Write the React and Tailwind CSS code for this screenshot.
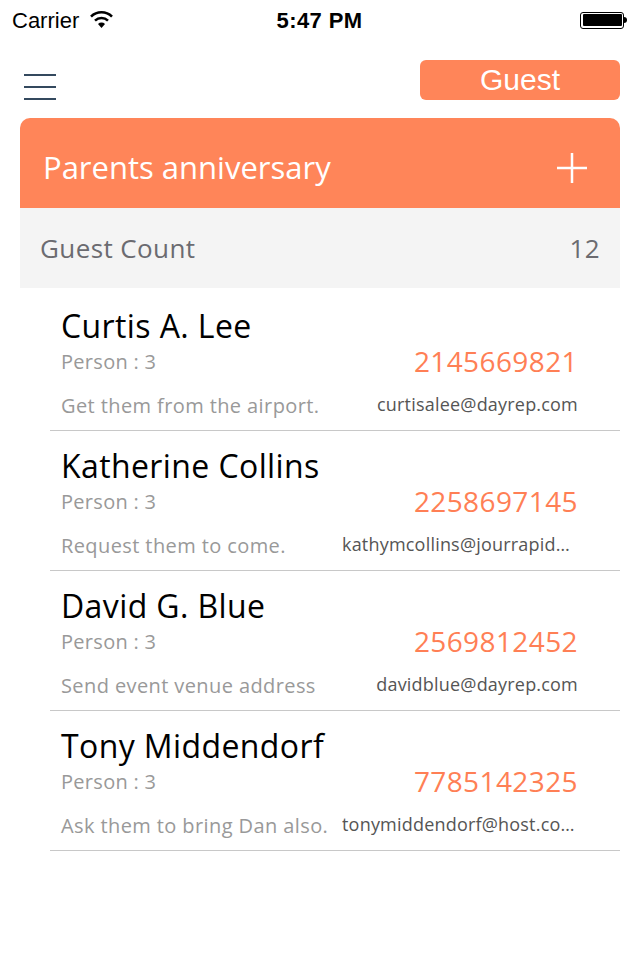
const guests = [
  {
    name: "Curtis A. Lee",
    persons: 3,
    phone: "2145669821",
    note: "Get them from the airport.",
    email: "curtisalee@dayrep.com",
  },
  {
    name: "Katherine Collins",
    persons: 3,
    phone: "2258697145",
    note: "Request them to come.",
    email: "kathymcollins@jourrapide.com",
  },
  {
    name: "David G. Blue",
    persons: 3,
    phone: "2569812452",
    note: "Send event venue address",
    email: "davidblue@dayrep.com",
  },
  {
    name: "Tony Middendorf",
    persons: 3,
    phone: "7785142325",
    note: "Ask them to bring Dan also.",
    email: "tonymiddendorf@host.com.au",
  },
];

function StatusBar() {
  return (
    <div className="h-10 grid grid-cols-3 items-center pl-3 pr-[13px] font-['Liberation_Sans',sans-serif] text-black">
      <div className="flex items-center gap-[10px] text-[22px]">
        <span>Carrier</span>
        <svg width="25" height="18" viewBox="0 0 25 18">
          <path d="M12.5 17 L9 13 A5 5 0 0 1 16 13 Z" fill="black" />
          <path d="M6 9.6 A9.5 9.5 0 0 1 19 9.6" stroke="black" strokeWidth="2.6" fill="none" />
          <path d="M2 5.6 A15 15 0 0 1 23 5.6" stroke="black" strokeWidth="2.6" fill="none" />
        </svg>
      </div>
      <span className="text-[22px] font-bold tracking-[0.4px] justify-self-center">5:47 PM</span>
      <div className="flex items-center justify-self-end">
        <div className="w-[44px] h-[17px] rounded-[3px] border border-black p-[1.5px]">
          <div className="w-full h-full bg-black rounded-[1px]" />
        </div>
        <div className="w-[3px] h-[6px] bg-black rounded-r-sm" />
      </div>
    </div>
  );
}

function GuestRow({ g }) {
  return (
    <div className="ml-[50px] mr-5 border-b border-[#c8c8c8] h-[140px] pl-[11px] pr-[42px] pt-[15px]">
      <div className="text-[32px] leading-[40px] tracking-[0.4px] text-black">{g.name}</div>
      <div className="flex items-center justify-between mt-[-4px]">
        <span className="text-[20px] tracking-[0.3px] text-[#999999]">Person : {g.persons}</span>
        <span className="text-[28px] tracking-[0.4px] text-[#ff7f55] mt-[-2px]">{g.phone}</span>
      </div>
      <div className="flex items-center justify-between gap-3 mt-[9px]">
        <span className="text-[20px] tracking-[0.4px] text-[#999999] whitespace-nowrap">{g.note}</span>
        <span className="text-[18px] tracking-[0.2px] text-[#555555] truncate max-w-[236px] mt-[-3px]">{g.email}</span>
      </div>
    </div>
  );
}

export default function App() {
  return (
    <div className="w-[640px] h-[960px] bg-white font-['Open_Sans',sans-serif] overflow-hidden">
      <StatusBar />
      <div className="flex items-center justify-between px-5 pt-5 pb-[18px]">
        <div className="flex flex-col gap-[10px] pl-1 pt-[14px]">
          <div className="w-8 h-[2px] bg-[#34495e]" />
          <div className="w-8 h-[2px] bg-[#34495e]" />
          <div className="w-8 h-[2px] bg-[#34495e]" />
        </div>
        <button className="w-[200px] h-10 rounded-md bg-[#ff8559] text-white text-[30px] leading-none font-['Liberation_Sans',sans-serif]">
          Guest
        </button>
      </div>
      <div className="mx-5">
        <div className="h-[90px] rounded-t-[10px] bg-[#ff8559] flex items-center justify-between pl-[23px] pr-8 pt-[9px]">
          <span className="text-[31px] text-white">Parents anniversary</span>
          <svg width="32" height="32" viewBox="0 0 32 32">
            <path d="M16 1 V31 M1 16 H31" stroke="white" strokeWidth="2.5" />
          </svg>
        </div>
        <div className="h-20 bg-[#f4f4f4] flex items-center justify-between px-5 text-[26px] tracking-[0.4px] text-[#6b6b70]">
          <span>Guest Count</span>
          <span>12</span>
        </div>
      </div>
      <div className="pt-[3px]">
        {guests.map((g) => (
          <GuestRow key={g.name} g={g} />
        ))}
      </div>
    </div>
  );
}
